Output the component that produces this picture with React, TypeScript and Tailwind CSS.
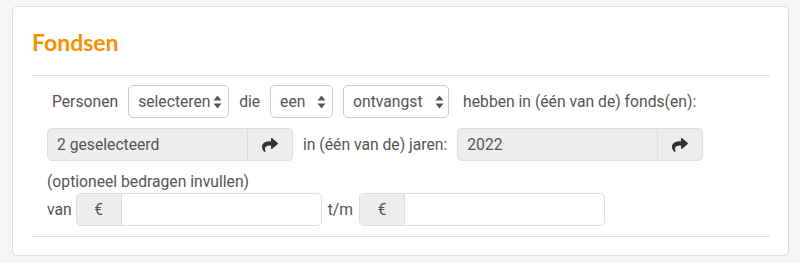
import React from "react";

const FONT = { fontFamily: "Roboto, 'Liberation Sans', sans-serif" };

function SelectArrows() {
  return (
    <svg width="9" height="14" viewBox="0 0 9 14" className="ml-[2px] shrink-0">
      <path d="M4.5 0.5 L8.5 5.5 L0.5 5.5 Z" fill="#555" />
      <path d="M4.5 13.5 L8.5 8.5 L0.5 8.5 Z" fill="#555" />
    </svg>
  );
}

function ShareIcon() {
  return (
    <svg width="16" height="16" viewBox="0 0 512 512">
      <path
        fill="#333"
        d="M503.691 189.836L327.687 37.851C312.281 24.546 288 35.347 288 56.015v80.053C127.371 137.907 0 170.1 0 322.326c0 61.441 39.581 122.309 83.333 154.132 13.653 9.931 33.111-2.533 28.077-18.631C66.066 312.814 132.917 274.316 288 272.085V360c0 20.7 24.3 31.453 39.687 18.164l176.004-152c11.071-9.562 11.086-26.753 0-36.328z"
      />
    </svg>
  );
}

function Select({ label, width, gap }: { label: string; width: string; gap: string }) {
  return (
    <div
      className={`flex h-[33px] shrink-0 items-center rounded-[5px] border border-[#ccc] bg-white pl-[9px] ${width}`}
    >
      <span className={gap}>{label}</span>
      <SelectArrows />
    </div>
  );
}

function PickGroup({ value }: { value: string }) {
  return (
    <div className="flex h-[33px] w-[246px] shrink-0 overflow-hidden rounded-[5px] border border-[#ddd] bg-[#eee]">
      <div className="flex flex-1 items-center pl-[9px]">{value}</div>
      <div className="flex w-[45px] items-center justify-center border-l border-[#ddd]">
        <ShareIcon />
      </div>
    </div>
  );
}

function EuroGroup() {
  return (
    <div className="flex h-[33px] w-[246px] shrink-0 overflow-hidden rounded-[5px] border border-[#ddd] bg-white">
      <div className="flex w-[45px] items-center justify-center border-r border-[#ddd] bg-[#eee]">€</div>
      <div className="flex-1" />
    </div>
  );
}

export default function App() {
  return (
    <div className="h-[263px] w-[800px] bg-[#f5f5f5] pl-[12px] pt-[6px]" style={FONT}>
      <div className="h-[250px] w-[777px] rounded-[5px] border border-[#ddd] bg-white px-[18px]">
        <div className="h-[68px] pt-[22px]">
          <h2
            className="pl-[1px] text-[23px] font-bold leading-[26px] text-[#f39200]"
            style={{ fontFamily: "Lato, 'Open Sans', sans-serif" }}
          >
            Fondsen
          </h2>
        </div>
        <div className="border-t border-[#ddd]" />
        <div className="pl-[16px] pr-[2px] text-[15.7px] text-[#555]">
          <div className="mt-[9px] flex items-center whitespace-nowrap">
            <span className="ml-[5px] mr-[10px]">Personen</span>
            <Select label="selecteren" width="w-[101px]" gap="" />
            <span className="mx-[10px]">die</span>
            <Select label="een" width="w-[63px]" gap="mr-[10px]" />
            <span className="w-[10px]" />
            <Select label="ontvangst" width="w-[106px]" gap="mr-[10px]" />
            <span className="ml-[14px]">hebben in (één van de) fonds(en):</span>
          </div>
          <div className="mt-[10px] flex items-center whitespace-nowrap">
            <PickGroup value="2 geselecteerd" />
            <span className="mx-[10px]">in (één van de) jaren:</span>
            <PickGroup value="2022" />
          </div>
          <div className="mt-[11px] leading-[20px]">(optioneel bedragen invullen)</div>
          <div className="mt-[1px] flex items-center whitespace-nowrap">
            <span className="mr-[4px]">van</span>
            <EuroGroup />
            <span className="mx-[6px]">t/m</span>
            <EuroGroup />
          </div>
        </div>
        <div className="mt-[10px] border-t border-[#ddd]" />
      </div>
    </div>
  );
}
